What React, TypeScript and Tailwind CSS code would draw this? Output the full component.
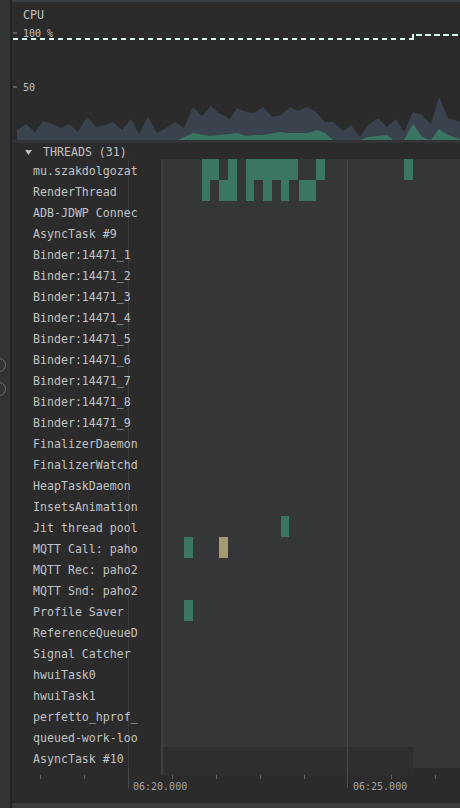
import type { ReactNode } from 'react'

type Block = { from: number; to: number; tone?: 'green' | 'tan' }

type Thread = { name: string; blocks?: Block[] }

const threads: Thread[] = [
  {
    name: 'mu.szakdolgozat',
    blocks: [
      { from: 39, to: 56 },
      { from: 65, to: 74 },
      { from: 83, to: 135 },
      { from: 153, to: 162 },
      { from: 241, to: 250 },
    ],
  },
  {
    name: 'RenderThread',
    blocks: [
      { from: 39, to: 47 },
      { from: 56, to: 74 },
      { from: 83, to: 91 },
      { from: 100, to: 109 },
      { from: 118, to: 126 },
      { from: 136, to: 153 },
    ],
  },
  { name: 'ADB-JDWP Connec' },
  { name: 'AsyncTask #9' },
  { name: 'Binder:14471_1' },
  { name: 'Binder:14471_2' },
  { name: 'Binder:14471_3' },
  { name: 'Binder:14471_4' },
  { name: 'Binder:14471_5' },
  { name: 'Binder:14471_6' },
  { name: 'Binder:14471_7' },
  { name: 'Binder:14471_8' },
  { name: 'Binder:14471_9' },
  { name: 'FinalizerDaemon' },
  { name: 'FinalizerWatchd' },
  { name: 'HeapTaskDaemon' },
  { name: 'InsetsAnimation' },
  { name: 'Jit thread pool', blocks: [{ from: 118, to: 126 }] },
  {
    name: 'MQTT Call: paho',
    blocks: [
      { from: 21, to: 30 },
      { from: 56, to: 65, tone: 'tan' },
    ],
  },
  { name: 'MQTT Rec: paho2' },
  { name: 'MQTT Snd: paho2' },
  { name: 'Profile Saver', blocks: [{ from: 21, to: 30 }] },
  { name: 'ReferenceQueueD' },
  { name: 'Signal Catcher' },
  { name: 'hwuiTask0' },
  { name: 'hwuiTask1' },
  { name: 'perfetto_hprof_' },
  { name: 'queued-work-loo' },
  { name: 'AsyncTask #10' },
]

const cpuTotal =
  '17,140 17,130 26,124 35,132 43,121 52,124 61,128 69,124 78,132 87,117 96,127 105,125 113,122 122,130 131,119 139,134 148,117 157,133 166,128 175,122 184,128 193,107 202,116 211,106 219,113 230,119 237,108 246,112 254,113 263,107 272,117 281,115 290,107 298,111 307,107 316,112 325,122 333,122 343,131 351,125 360,137 368,125 378,118 387,127 396,119 404,132 413,112 422,115 431,124 439,97 448,118 460,122 460,140'

const cpuApp =
  '178,140 193,133 210,136 230,134 237,133 246,136 255,135 263,135 280,132 288,133 308,133 317,130 325,133 333,140 360,140 368,137 387,135 393,140 404,140 413,124 422,137 431,140 439,129 448,135 460,139 460,140'

const mono = "font-['DejaVu_Sans_Mono',monospace]"

function CpuChart() {
  return (
    <svg width={448} height={114} className="block">
      <g transform="translate(-12,-26)" fontFamily="DejaVu Sans Mono, monospace" fontSize={10}>
        <polygon points={cpuTotal} fill="#3a434d" />
        <polygon points={cpuApp} fill="#3a7562" />
        <line x1={13} y1={33} x2={17} y2={33} stroke="#8a8c8e" />
        <text x={23} y={37} fill="#bfc1c4">
          100 %
        </text>
        <line x1={13} y1={87} x2={17} y2={87} stroke="#8a8c8e" />
        <text x={23} y={91} fill="#bfc1c4">
          50
        </text>
        <line x1={13} y1={39} x2={412} y2={39} stroke="#d6f7ef" strokeWidth={2} strokeDasharray="5 4" />
        <line x1={413} y1={34} x2={413} y2={40} stroke="#d6f7ef" strokeWidth={2} />
        <line x1={416} y1={35} x2={460} y2={35} stroke="#d6f7ef" strokeWidth={2} strokeDasharray="6 3" />
      </g>
    </svg>
  )
}

function TimeAxis() {
  const minor = [40, 84, 172, 216, 260, 304, 391, 435]
  return (
    <svg width={448} height={35} className="block">
      <g transform="translate(-12,-768)" fontFamily="DejaVu Sans Mono, monospace" fontSize={10}>
        <rect x={161} y={768} width={2} height={7} fill="#3d3e3f" />
        <rect x={163} y={768} width={250} height={7} fill="#2e2e2e" />
        {minor.map((x) => (
          <line key={x} x1={x + 0.5} y1={775} x2={x + 0.5} y2={779} stroke="#5e6063" />
        ))}
        <line x1={128.5} y1={768} x2={128.5} y2={788} stroke="#4a4b4d" />
        <line x1={347.5} y1={768} x2={347.5} y2={788} stroke="#4a4b4d" />
        <text x={133} y={790} fill="#a3a5a8">
          06:20.000
        </text>
        <text x={353} y={790} fill="#a3a5a8">
          06:25.000
        </text>
      </g>
    </svg>
  )
}

function Track({ blocks, last, children }: { blocks?: Block[]; last: boolean; children?: ReactNode }) {
  return (
    <div className="relative flex flex-1 border-l-2 border-[#3d3e3f] bg-[#353637]">
      {last && <div className="w-[250px] bg-[#2e2e2e]" />}
      {blocks?.map((b) => (
        <div
          key={b.from}
          className={`absolute top-0 bottom-0 ${b.tone === 'tan' ? 'bg-[#a69a70]' : 'bg-[#3b7663]'}`}
          style={{ left: b.from, width: b.to - b.from }}
        />
      ))}
      {children}
    </div>
  )
}

export default function App() {
  return (
    <div className={`flex h-[808px] w-[460px] overflow-hidden bg-[#2b2b2b] ${mono}`}>
      <div className="relative w-[12px] shrink-0 border-r-2 border-[#232425] bg-[#313335]">
        <div className="absolute top-[358px] left-[-8px] h-[14px] w-[14px] rounded-full border border-[#6a6d70]" />
        <div className="absolute top-[382px] left-[-8px] h-[14px] w-[14px] rounded-full border border-[#6a6d70]" />
      </div>

      <div className="flex min-w-0 flex-1 flex-col border-t-2 border-[#3c3f41]">
        <div className="flex h-[24px] items-center pt-[4px] pl-[11px] text-[11.6px] text-[#c0c2c5]">CPU</div>
        <CpuChart />
        <div className="h-[3px] bg-[#323335]" />

        <div className="flex h-[16px] items-center pt-[3px] pl-[13px] text-[11.6px] text-[#c0c2c5]">
          <svg width={7} height={5} className="mr-[11px]">
            <polygon points="0,0 7,0 3.5,5" fill="#b8babd" />
          </svg>
          THREADS (31)
        </div>

        <div className="relative flex flex-col">
          <div className="pointer-events-none absolute top-0 bottom-0 left-[116px] w-px bg-[#393a3b]" />
          {threads.map((t, i) => (
            <div key={t.name} className="flex h-[21px]">
              <div className="relative flex w-[149px] shrink-0 items-center pt-[4px] pl-[21px] text-[11.6px] whitespace-nowrap text-[#c0c2c5]">
                {t.name}
              </div>
              <Track blocks={t.blocks} last={i === threads.length - 1} />
            </div>
          ))}
          <div className="pointer-events-none absolute top-0 bottom-0 left-[335px] w-px bg-[#444547]" />
        </div>

        <TimeAxis />
        <div className="flex-1 bg-[#3a3c3e]" />
      </div>
    </div>
  )
}
